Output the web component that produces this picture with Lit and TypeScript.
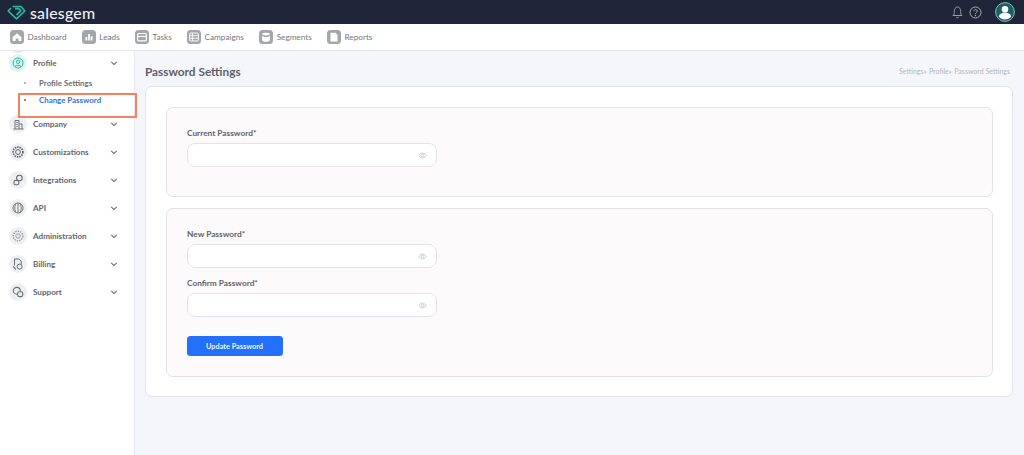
import { LitElement, html, css, svg } from "lit";
import { customElement } from "lit/decorators.js";

const navIcons: Record<string, unknown> = {
  Dashboard: svg`<path d="M3 8.200 8 3.600l5 4.600v4.400H9.600V9.800H6.400v2.800H3z" fill="#fff"/>`,
  Leads: svg`<path d="M4 12V8h2v4zM7 12V4.500h2V12zM10 12V7h2v5z" fill="#fff"/>`,
  Tasks: svg`<rect x="3" y="4" width="10" height="8.500" rx="1.200" fill="none" stroke="#fff" stroke-width="1.300"/><path d="M3 7.400h10" stroke="#fff" stroke-width="1.300"/>`,
  Campaigns: svg`<rect x="3" y="3.500" width="10" height="9" rx="1.200" fill="none" stroke="#fff" stroke-width="1.100"/><path d="M3 6.500h10M3 9.500h10M6.200 3.500v9" stroke="#fff" stroke-width="1"/>`,
  Segments: svg`<ellipse cx="8" cy="4.600" rx="4.400" ry="1.600" fill="#fff"/><path d="M3.600 6.600v5c0 1 2 1.800 4.400 1.800s4.400-.8 4.400-1.800v-5c-1 1-2.600 1.500-4.400 1.500s-3.400-.5-4.400-1.500z" fill="#fff"/>`,
  Reports: svg`<path d="M4 3h5.600L12 5.400V13H4z" fill="#fff"/>`,
};

const sideIcons: Record<string, unknown> = {
  Company: svg`<path d="M5 13V4.500h4V13M9 8h3v5M3.500 13h10M6.200 6.500h1.600M6.200 8.500h1.600M6.200 10.500h1.600" fill="none" stroke="#6f727a" stroke-width="1"/>`,
  Customizations: svg`<circle cx="8" cy="8" r="4.900" fill="none" stroke="#5f626a" stroke-width="1.700" stroke-dasharray="1.500 .9"/><circle cx="8" cy="8" r="2.400" fill="none" stroke="#5f626a" stroke-width="1"/>`,
  Integrations: svg`<circle cx="9.400" cy="6" r="2.800" fill="none" stroke="#686b73" stroke-width="1.100"/><rect x="4" y="8.400" width="4.800" height="4.400" rx="1.600" fill="none" stroke="#686b73" stroke-width="1.100"/>`,
  API: svg`<circle cx="8" cy="8" r="5" fill="none" stroke="#73767e" stroke-width="1"/><path d="M8 3v10M5.800 3.800c-1.400 2.500-1.400 5.900 0 8.400M10.200 3.800c1.400 2.500 1.400 5.900 0 8.400" fill="none" stroke="#73767e" stroke-width=".9"/>`,
  Administration: svg`<circle cx="8" cy="8" r="4.800" fill="none" stroke="#92959c" stroke-width="1.300" stroke-dasharray="1.400 1"/><circle cx="8" cy="8" r="2.200" fill="none" stroke="#92959c" stroke-width=".9"/>`,
  Billing: svg`<path d="M4.500 3h4.500l2.200 2.200v3M4.500 3v6.500" fill="none" stroke="#686b73" stroke-width="1"/><circle cx="9.600" cy="10.600" r="2.500" fill="none" stroke="#686b73" stroke-width="1"/><path d="M3.200 10.500l2.800 2.800" stroke="#686b73" stroke-width="1.100"/>`,
  Support: svg`<circle cx="6.800" cy="6.800" r="3.400" fill="none" stroke="#686b73" stroke-width="1.100"/><rect x="7.600" y="7.800" width="5.200" height="4.800" rx="1.800" fill="#eeeff1" stroke="#686b73" stroke-width="1.100"/>`,
};

const eye = html`<svg class="eye" viewBox="0 0 12 12" aria-hidden="true"><path d="M1.200 6C2.400 3.800 4 2.800 6 2.800s3.600 1 4.800 3.200C9.600 8.200 8 9.200 6 9.200S2.400 8.200 1.200 6z" fill="none" stroke="#bcbec2" stroke-width="1.100"/><circle cx="6" cy="6" r="1.700" fill="none" stroke="#bcbec2" stroke-width="1"/></svg>`;

const chevron = html`<svg class="chev" viewBox="0 0 8 8" aria-hidden="true"><path d="M1.200 2.800 4 5.400l2.800-2.600" fill="none" stroke="#6d7078" stroke-width="1.100"/></svg>`;

@customElement("app-root")
export class AppRoot extends LitElement {
  static styles = css`
    :host { display: block; width: 1024px; height: 455px; overflow: hidden; position: relative; font-family: "Lato", "Open Sans", sans-serif; color: #5c5f69; background: #f4f6fb; }
    .top { height: 24px; background: #20263a; display: flex; align-items: center; padding: 0 9px 0 7px; }
    .logo { display: flex; align-items: center; gap: 4px; color: #eef0f3; font-size: 15.900px; font-weight: 500; letter-spacing: .2px; }
    .logo svg { width: 19px; height: 15px; }
    .top-right { margin-left: auto; display: flex; align-items: center; }
    .bell { width: 13px; height: 14px; }
    .help { width: 13px; height: 13px; margin: 0 13.500px 0 5px; }
    .avatar { width: 20px; height: 20px; }
    .nav { height: 26px; background: #fff; border-bottom: 1px solid #e6e8ee; display: flex; align-items: center; padding-left: 10px; font-size: 8.200px; color: #73767e; }
    .nav-item { display: flex; align-items: center; gap: 3.500px; margin-right: 15.300px; }
    .nav-icon { width: 14px; height: 14px; border-radius: 3.500px; background: #a3a7aa; display: flex; }
    .nav-icon svg { width: 14px; height: 14px; }
    .body { display: flex; height: 404px; }
    .side { width: 134px; flex: none; background: #fff; border-right: 1px solid #e7e9ef; overflow: hidden; }
    .stub { height: 2px; overflow: hidden; padding-left: 9px; }
    .stub span { display: block; width: 18px; height: 18px; margin-top: -16px; border-radius: 50%; background: #e6e7e9; }
    .row { height: 28px; display: flex; align-items: center; padding-left: 9px; font-size: 8.100px; font-weight: 700; color: #63666f; }
    .circle { width: 18px; height: 18px; border-radius: 50%; background: #eeeff1; display: flex; align-items: center; justify-content: center; margin-right: 6px; flex: none; }
    .circle svg { width: 16px; height: 16px; }
    .circle.on { background: #def5f1; }
    .chev { width: 8px; height: 8px; margin-left: auto; margin-right: 16px; }
    .first { height: 20px; }
    .subs { height: 37px; padding-top: 1.500px; box-sizing: border-box; }
    .sub { display: flex; align-items: center; height: 17px; padding-left: 24px; font-size: 7.900px; font-weight: 700; color: #6c6f78; }
    .sub::before { content: ""; width: 1.500px; height: 1.500px; border-radius: 50%; background: #a9abb0; margin-right: 13.500px; }
    .sub.active { color: #2f6ff0; }
    .sub.active::before { background: #777; }
    .main { flex: 1; padding: 12px 11px 0 10px; min-width: 0; }
    .head { display: flex; align-items: center; justify-content: space-between; height: 16px; margin-bottom: 7px; padding-right: 3px; }
    h1 { margin: 0; font-size: 11.800px; font-weight: 700; color: #5d6069; }
    .crumbs { font-size: 7px; color: #b4b7bd; display: flex; gap: 2.500px; }
    .card { height: 311px; box-sizing: border-box; background: #fff; border: 1px solid #e2e4ea; border-radius: 7px; padding: 20px 19px 0 20px; }
    .panel { background: #fcfafb; border: 1px solid #e2e3e7; border-radius: 7px; padding: 0 20px; box-sizing: border-box; margin-bottom: 11px; }
    .p1 { height: 90px; padding-top: 19px; }
    .p2 { height: 169px; padding-top: 19px; }
    label { display: block; font-size: 8.300px; font-weight: 700; color: #5f626b; line-height: 12px; margin-bottom: 4px; }
    .input { width: 250px; height: 24px; box-sizing: border-box; background: #fff; border: 1.500px solid #e2e4e9; border-radius: 8px; display: flex; align-items: center; justify-content: flex-end; padding-right: 9px; margin-bottom: 9px; margin-left: -.500px; }
    .eye { width: 9px; height: 9px; }
    button { display: block; width: 96px; height: 20px; margin-top: 19px; margin-left: -.500px; border: 0; border-radius: 3.500px; background: #2270fb; color: #eef4ff; font: 700 7.300px "Lato", sans-serif; padding: 0; }
    .mark { position: absolute; left: 18px; top: 93px; width: 119px; height: 25px; box-sizing: border-box; border: 2px solid #f5825f; pointer-events: none; }
  `;

  render() {
    const navs = ["Dashboard", "Leads", "Tasks", "Campaigns", "Segments", "Reports"];
    const sides = ["Company", "Customizations", "Integrations", "API", "Administration", "Billing", "Support"];
    return html`
      <div class="top">
        <div class="logo">
          <svg viewBox="0 0 19 15" aria-hidden="true"><path d="M5.500 1.500h8.500l3.800 4.500-8.300 7.800L1.200 6l2.800-3M9.500 9.800l4.300-3.900-2-2.200H8" fill="none" stroke="#29b8a4" stroke-width="1.700" stroke-linejoin="round"/></svg>
          <span>salesgem</span>
        </div>
        <div class="top-right">
          <svg class="bell" viewBox="0 0 13 14" aria-hidden="true"><path d="M2 10.500c1.200-1 1.300-2.200 1.300-4C3.300 4 4.600 2 6.500 2s3.200 2 3.200 4.500c0 1.800.1 3 1.300 4zM5.200 12c.4.900 2.200.9 2.600 0" fill="none" stroke="#9a9da6" stroke-width="1"/></svg>
          <svg class="help" viewBox="0 0 13 13" aria-hidden="true"><circle cx="6.500" cy="6.500" r="5.500" fill="none" stroke="#aeb1b8" stroke-width="1"/><path d="M4.900 5.200c0-2.100 3.300-2.100 3.300-.1 0 1.300-1.700 1.300-1.700 2.700" fill="none" stroke="#aeb1b8" stroke-width="1"/><circle cx="6.500" cy="9.500" r=".7" fill="#aeb1b8"/></svg>
          <svg class="avatar" viewBox="0 0 20 20" aria-hidden="true"><circle cx="10" cy="10" r="9.400" fill="#1e5f63" stroke="#7fc0bb" stroke-width="1"/><circle cx="10" cy="7.300" r="3.300" fill="#fff"/><path d="M3.800 14.500c.8-3 3.400-4 6.200-4s5.400 1 6.200 4c-1.500 1.900-3.700 3-6.200 3s-4.700-1.100-6.200-3z" fill="#fff"/></svg>
        </div>
      </div>
      <div class="nav">
        ${navs.map((n) => html`<div class="nav-item"><span class="nav-icon"><svg viewBox="0 0 16 16" aria-hidden="true">${navIcons[n]}</svg></span>${n}</div>`)}
      </div>
      <div class="body">
        <aside class="side">
          <div class="stub"><span></span></div>
          <div class="row first">
            <span class="circle on"><svg viewBox="0 0 16 16" aria-hidden="true"><circle cx="8" cy="8" r="5" fill="none" stroke="#28b9a4" stroke-width="1"/><circle cx="8" cy="6.800" r="1.700" fill="none" stroke="#28b9a4" stroke-width="1"/><path d="M5 11.500c.6-1.700 5.400-1.700 6 0" fill="none" stroke="#28b9a4" stroke-width="1"/></svg></span>
            Profile${chevron}
          </div>
          <div class="subs">
            <div class="sub">Profile Settings</div>
            <div class="sub active">Change Password</div>
          </div>
          ${sides.map((s) => html`<div class="row"><span class="circle"><svg viewBox="0 0 16 16" aria-hidden="true">${sideIcons[s]}</svg></span>${s}${chevron}</div>`)}
        </aside>
        <main class="main">
          <div class="head">
            <h1>Password Settings</h1>
            <div class="crumbs"><span>Settings»</span><span>Profile»</span><span>Password Settings</span></div>
          </div>
          <div class="card">
            <section class="panel p1">
              <label>Current Password*</label>
              <div class="input">${eye}</div>
            </section>
            <section class="panel p2">
              <label>New Password*</label>
              <div class="input">${eye}</div>
              <label>Confirm Password*</label>
              <div class="input">${eye}</div>
              <button>Update Password</button>
            </section>
          </div>
        </main>
      </div>
      <div class="mark"></div>
    `;
  }
}
